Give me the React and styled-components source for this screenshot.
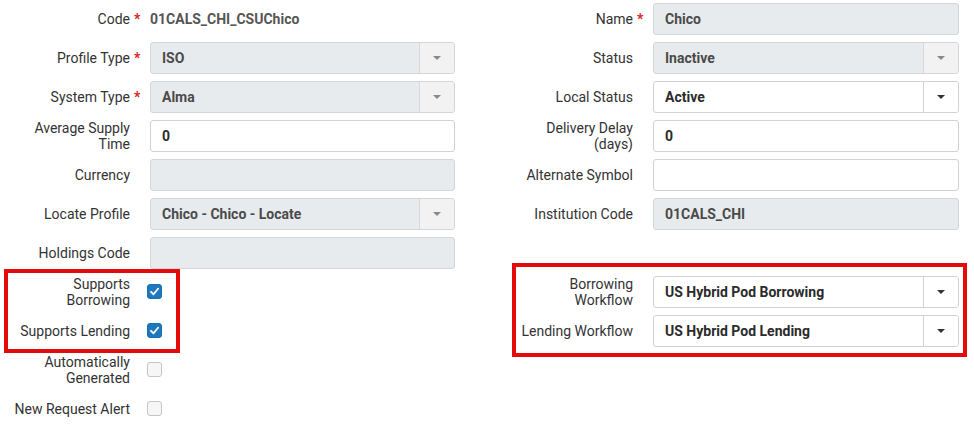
import React from 'react';
import styled, { createGlobalStyle } from 'styled-components';

const GlobalStyle = createGlobalStyle`
  html, body {
    margin: 0;
    padding: 0;
    background: #ffffff;
  }
  body {
    font-family: Roboto, "Liberation Sans", Arial, sans-serif;
    font-size: 14px;
    color: #333;
  }
`;

const Page = styled.div`
  position: relative;
  width: 974px;
  height: 430px;
  display: grid;
  grid-template-columns: 455px 456px;
  column-gap: 48px;
  padding-top: 3px;
  box-sizing: border-box;
`;

const Column = styled.div`
  display: flex;
  flex-direction: column;
  gap: 7px;
`;

const Row = styled.div`
  display: grid;
  grid-template-columns: 130px 20px 1fr;
  align-items: center;
  height: 32px;
`;

const Label = styled.div`
  text-align: right;
  line-height: 16px;
  color: #333;
  padding-left: 12px;
`;

const Star = styled.span`
  color: #e0201b;
  font-weight: 700;
  padding-left: 4px;
  font-size: 14px;
  align-self: center;
`;

const Value = styled.div`
  font-weight: 700;
  color: #555;
`;

const Field = styled.div`
  height: 32px;
  box-sizing: border-box;
  border: 1px solid ${p => (p.$disabled ? '#d3d7db' : '#cfd2d6')};
  border-radius: 3px;
  background: ${p => (p.$disabled ? '#e8ebee' : '#ffffff')};
  display: flex;
  align-items: stretch;
  overflow: hidden;
`;

const FieldText = styled.div`
  flex: 1;
  display: flex;
  align-items: center;
  padding-left: 11px;
  font-weight: 700;
  color: ${p => (p.$disabled ? '#4a4a4a' : '#2b2b2b')};
`;

const DropButton = styled.div`
  width: 34px;
  border-left: 1px solid ${p => (p.$disabled ? '#d6d8da' : '#cfd2d6')};
  background: ${p => (p.$disabled ? '#f2f2f2' : '#ffffff')};
  display: flex;
  align-items: center;
  justify-content: center;
`;

const Caret = styled.span`
  width: 0;
  height: 0;
  border-left: 4px solid transparent;
  border-right: 4px solid transparent;
  border-top: 4px solid ${p => (p.$disabled ? '#8a8a8a' : '#333')};
`;

const Box = styled.div`
  width: 15px;
  height: 15px;
  box-sizing: border-box;
  border-radius: 3px;
  margin-left: -3px;
  margin-top: -2px;
  border: 1px solid ${p => (p.$checked ? '#1a6fae' : '#c4c4c4')};
  background: ${p => (p.$checked ? '#1f78bd' : '#f6f6f6')};
  display: flex;
  align-items: center;
  justify-content: center;
`;

const Highlight = styled.div`
  position: absolute;
  border: 4px solid #e30b0b;
  box-sizing: border-box;
  pointer-events: none;
`;

function Select({ value, disabled }) {
  return (
    <Field $disabled={disabled}>
      <FieldText $disabled={disabled}>{value}</FieldText>
      <DropButton $disabled={disabled}>
        <Caret $disabled={disabled} />
      </DropButton>
    </Field>
  );
}

function Input({ value, disabled }) {
  return (
    <Field $disabled={disabled}>
      <FieldText $disabled={disabled}>{value}</FieldText>
    </Field>
  );
}

function Checkbox({ checked }) {
  return (
    <Box $checked={checked}>
      {checked && (
        <svg width="11" height="11" viewBox="0 0 12 12">
          <path d="M2.2 6.3 L4.9 9 L9.9 3" fill="none" stroke="#fff" strokeWidth="2" strokeLinecap="round" strokeLinejoin="round" />
        </svg>
      )}
    </Box>
  );
}

function FormRow({ label, required, children }) {
  return (
    <Row>
      <Label>{label}</Label>
      {required ? <Star>*</Star> : <span />}
      <div>{children}</div>
    </Row>
  );
}

export default function App() {
  return (
    <>
      <GlobalStyle />
      <Page>
        <Column>
          <FormRow label="Code" required><Value>01CALS_CHI_CSUChico</Value></FormRow>
          <FormRow label="Profile Type" required><Select value="ISO" disabled /></FormRow>
          <FormRow label="System Type" required><Select value="Alma" disabled /></FormRow>
          <FormRow label="Average Supply Time"><Input value="0" /></FormRow>
          <FormRow label="Currency"><Input value="" disabled /></FormRow>
          <FormRow label="Locate Profile"><Select value="Chico - Chico - Locate" disabled /></FormRow>
          <FormRow label="Holdings Code"><Input value="" disabled /></FormRow>
          <FormRow label="Supports Borrowing"><Checkbox checked /></FormRow>
          <FormRow label="Supports Lending"><Checkbox checked /></FormRow>
          <FormRow label="Automatically Generated"><Checkbox /></FormRow>
          <FormRow label="New Request Alert"><Checkbox /></FormRow>
        </Column>
        <Column>
          <FormRow label="Name" required><Input value="Chico" disabled /></FormRow>
          <FormRow label="Status"><Select value="Inactive" disabled /></FormRow>
          <FormRow label="Local Status"><Select value="Active" /></FormRow>
          <FormRow label="Delivery Delay (days)"><Input value="0" /></FormRow>
          <FormRow label="Alternate Symbol"><Input value="" /></FormRow>
          <FormRow label="Institution Code"><Input value="01CALS_CHI" disabled /></FormRow>
          <Row />
          <FormRow label="Borrowing Workflow"><Select value="US Hybrid Pod Borrowing" /></FormRow>
          <FormRow label="Lending Workflow"><Select value="US Hybrid Pod Lending" /></FormRow>
        </Column>
        <Highlight style={{ left: 4, top: 269, width: 176, height: 84 }} />
        <Highlight style={{ left: 512, top: 263, width: 455, height: 94 }} />
      </Page>
    </>
  );
}
